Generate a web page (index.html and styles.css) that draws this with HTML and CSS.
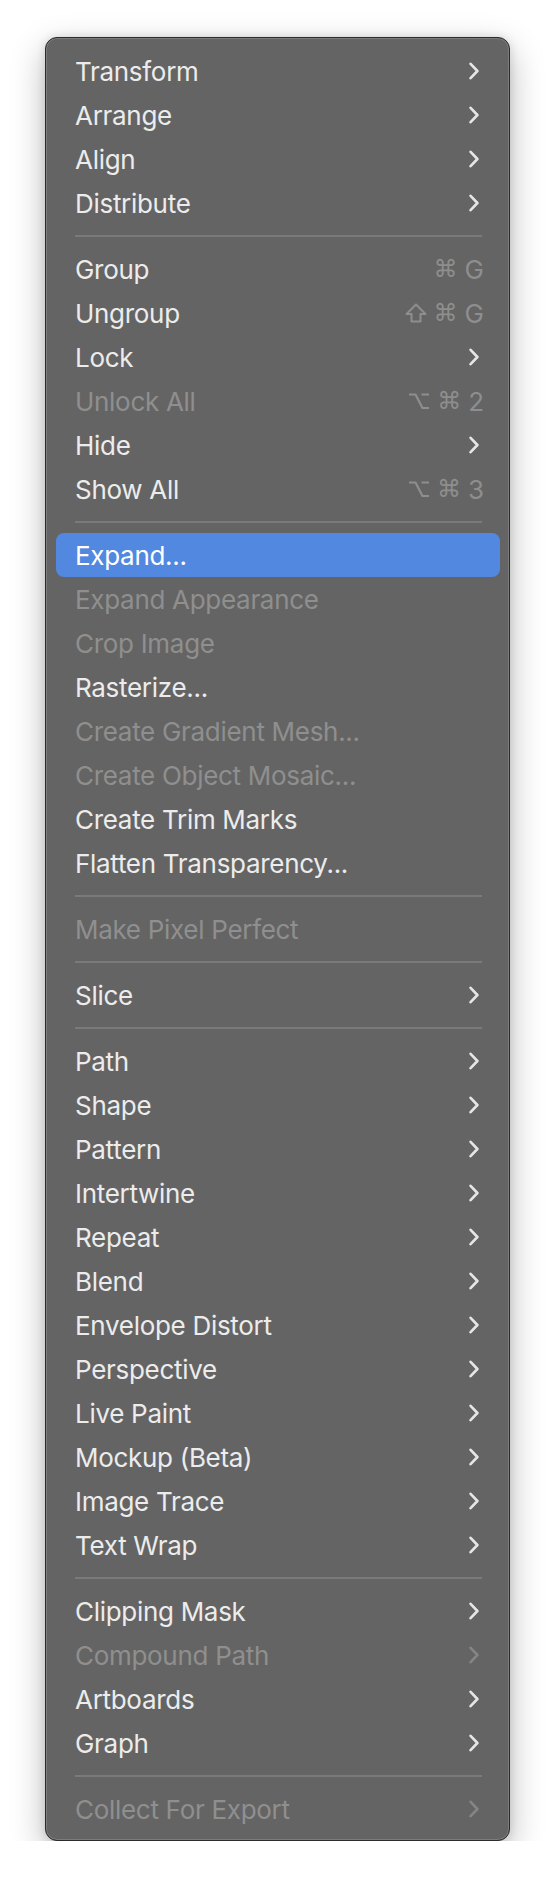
FILE: index.html
```html
<!DOCTYPE html>
<html lang="en">
  <head>
    <meta charset="UTF-8" />
    <meta name="viewport" content="width=device-width, initial-scale=1" />
    <title>Object Menu</title>
    <link rel="stylesheet" href="styles.css">
  </head>
  <body>
    <div class="menu">
      <div class="item sub">Transform</div>
      <div class="item sub">Arrange</div>
      <div class="item sub">Align</div>
      <div class="item sub">Distribute</div>
      <div class="sep"></div>
      <div class="item">Group<span class="keys"><span class="cmd">⌘</span><span>G</span></span></div>
      <div class="item">Ungroup<span class="keys"><span class="shift"></span><span class="cmd">⌘</span><span>G</span></span></div>
      <div class="item sub">Lock</div>
      <div class="item off">Unlock All<span class="keys"><span class="opt"></span><span class="cmd">⌘</span><span>2</span></span></div>
      <div class="item sub">Hide</div>
      <div class="item">Show All<span class="keys"><span class="opt"></span><span class="cmd">⌘</span><span>3</span></span></div>
      <div class="sep"></div>
      <div class="item active">Expand...</div>
      <div class="item off">Expand Appearance</div>
      <div class="item off">Crop Image</div>
      <div class="item">Rasterize...</div>
      <div class="item off">Create Gradient Mesh...</div>
      <div class="item off">Create Object Mosaic...</div>
      <div class="item">Create Trim Marks</div>
      <div class="item">Flatten Transparency...</div>
      <div class="sep"></div>
      <div class="item off">Make Pixel Perfect</div>
      <div class="sep"></div>
      <div class="item sub">Slice</div>
      <div class="sep"></div>
      <div class="item sub">Path</div>
      <div class="item sub">Shape</div>
      <div class="item sub">Pattern</div>
      <div class="item sub">Intertwine</div>
      <div class="item sub">Repeat</div>
      <div class="item sub">Blend</div>
      <div class="item sub">Envelope Distort</div>
      <div class="item sub">Perspective</div>
      <div class="item sub">Live Paint</div>
      <div class="item sub">Mockup (Beta)</div>
      <div class="item sub">Image Trace</div>
      <div class="item sub">Text Wrap</div>
      <div class="sep"></div>
      <div class="item sub">Clipping Mask</div>
      <div class="item sub off">Compound Path</div>
      <div class="item sub">Artboards</div>
      <div class="item sub">Graph</div>
      <div class="sep"></div>
      <div class="item sub off">Collect For Export</div>
    </div>

    <script>
      // submenu chevrons and modifier key icons
      const chev =
        '<svg class="chev" width="10" height="18" viewBox="0 0 10 18"><path d="M1.6 1.8 L8.4 9 L1.6 16.2" fill="none" stroke="currentColor" stroke-width="2.6" stroke-linecap="round" stroke-linejoin="round"/></svg>';
      const shift =
        '<svg width="22" height="20" viewBox="0 0 22 20"><path d="M11 1.5 L20.5 11 H15.5 V18.5 H6.5 V11 H1.5 Z" fill="none" stroke="currentColor" stroke-width="2" stroke-linejoin="round"/></svg>';
      const opt =
        '<svg width="22" height="18" viewBox="0 0 22 18"><path d="M1 2.5 H7.5 L14.5 16 H21 M13.5 2.5 H21" fill="none" stroke="currentColor" stroke-width="2.2"/></svg>';
      document.querySelectorAll(".item.sub").forEach((item) => {
        item.insertAdjacentHTML("beforeend", chev);
      });
      document.querySelectorAll(".shift").forEach((el) => (el.innerHTML = shift));
      document.querySelectorAll(".opt").forEach((el) => (el.innerHTML = opt));
    </script>
  </body>
</html>
```

FILE: styles.css
```css
body {
  margin: 0;
  background: #fff;
  font-family: Inter, "Noto Sans", sans-serif;
}
.menu {
  box-sizing: border-box;
  width: 465px;
  margin: 37px 0 0 45px;
  padding: 11px 9px 9px 10px;
  background: #646464;
  border: 1px solid #2b2b2b;
  border-radius: 12px;
  box-shadow: inset 0 0 0 1px #7c7c7c, 0 12px 34px rgba(0, 0, 0, 0.28),
    0 0 10px rgba(0, 0, 0, 0.12);
}
.item {
  display: flex;
  align-items: center;
  height: 44px;
  padding: 0 21px 0 19px;
  border-radius: 8px;
  color: #ececec;
  font-size: 26px;
  letter-spacing: -0.3px;
  white-space: nowrap;
}
.item.off {
  color: #8f8f8f;
}
.item.active {
  background: #5288df;
  color: #fff;
}
.chev {
  margin-left: auto;
  color: #e6e6e6;
}
.item.off .chev {
  color: #858585;
}
.keys {
  margin-left: auto;
  margin-right: -5px;
  display: flex;
  align-items: center;
  gap: 7px;
  color: #8e8e8e;
  letter-spacing: 0;
}
.keys span {
  display: flex;
  align-items: center;
}
.cmd {
  font-family: "DejaVu Sans", sans-serif;
  font-size: 24px;
}
.sep {
  height: 2px;
  margin: 10px 18px 10px 19px;
  background: #7a7a7a;
}
```
